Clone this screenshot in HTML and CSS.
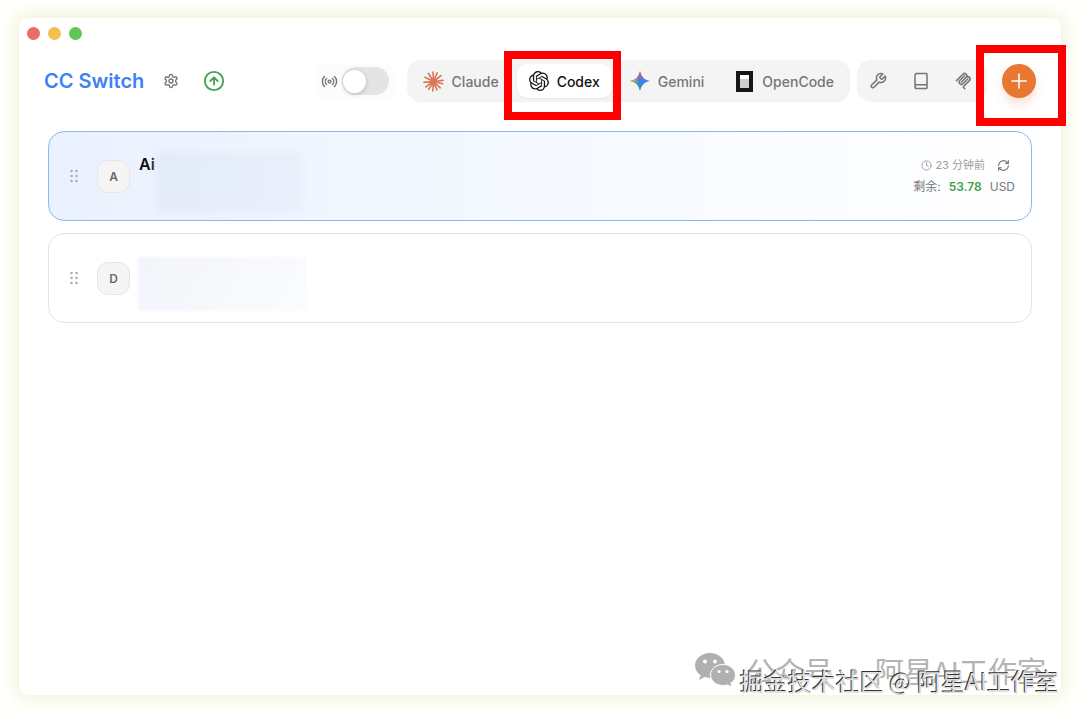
FILE: index.html
```html
<!DOCTYPE html>
<html lang="zh-CN">
<head>
<meta charset="utf-8">
<meta name="viewport" content="width=device-width, initial-scale=1">
<title>CC Switch</title>
<link rel="stylesheet" href="styles.css">
</head>
<body>
<div class="window">
  <div class="lights"><span class="light red"></span><span class="light yellow"></span><span class="light green"></span></div>
  <header class="header">
    <h1 class="brand">CC Switch</h1>
    <button class="icon-button settings" aria-label="设置">
      <svg class="line" width="16" height="16" viewBox="0 0 24 24"><path d="M12.22 2h-.44a2 2 0 0 0-2 2v.18a2 2 0 0 1-1 1.73l-.43.25a2 2 0 0 1-2 0l-.15-.08a2 2 0 0 0-2.73.73l-.22.38a2 2 0 0 0 .73 2.73l.15.1a2 2 0 0 1 1 1.72v.51a2 2 0 0 1-1 1.74l-.15.09a2 2 0 0 0-.73 2.73l.22.38a2 2 0 0 0 2.73.73l.15-.08a2 2 0 0 1 2 0l.43.25a2 2 0 0 1 1 1.73V20a2 2 0 0 0 2 2h.44a2 2 0 0 0 2-2v-.18a2 2 0 0 1 1-1.73l.43-.25a2 2 0 0 1 2 0l.15.08a2 2 0 0 0 2.73-.73l.22-.39a2 2 0 0 0-.73-2.73l-.15-.08a2 2 0 0 1-1-1.74v-.5a2 2 0 0 1 1-1.74l.15-.09a2 2 0 0 0 .73-2.73l-.22-.38a2 2 0 0 0-2.73-.73l-.15.08a2 2 0 0 1-2 0l-.43-.25a2 2 0 0 1-1-1.73V4a2 2 0 0 0-2-2z"/><circle cx="12" cy="12" r="3"/></svg>
    </button>
    <button class="icon-button update" aria-label="更新">
      <svg class="line" width="22" height="22" viewBox="0 0 24 24"><circle cx="12" cy="12" r="10"/><path d="m16 12-4-4-4 4M12 16V8"/></svg>
    </button>
    <div class="actions">
      <label class="proxy">
        <svg class="line" width="17" height="17" viewBox="0 0 24 24"><path d="M4.9 19.1C1 15.2 1 8.8 4.9 4.9M7.8 16.2c-2.3-2.3-2.3-6.1 0-8.5M16.2 7.8c2.3 2.3 2.3 6.1 0 8.5M19.1 4.9C23 8.8 23 15.1 19.1 19"/><circle cx="12" cy="12" r="2"/></svg>
        <input class="switch" type="checkbox" role="switch" aria-label="代理">
      </label>
      <nav class="tabs">
        <button class="tab">
          <svg width="21" height="21" viewBox="0 0 24 24" fill="none" stroke="#d97757" stroke-width="1.9" stroke-linecap="round"><path d="M12 12 11.5 1.2M12 12 16.2 2M12 12 20.5 5.2M12 12 22.8 10.8M12 12 22.5 14.5M12 12 19.7 19.2M12 12 16 21.5M12 12 11.2 22.8M12 12 6.5 21M12 12 3.2 18.2M12 12 1.2 13M12 12 2.2 7.2M12 12 6.2 2.8"/></svg>
          <span>Claude</span>
        </button>
        <button class="tab active" aria-current="page">
          <svg width="20" height="20" viewBox="0 0 24 24" fill="#161616"><path d="M22.2819 9.8211a5.9847 5.9847 0 0 0-.5157-4.9108 6.0462 6.0462 0 0 0-6.5098-2.9A6.0651 6.0651 0 0 0 4.9807 4.1818a5.9847 5.9847 0 0 0-3.9977 2.9 6.0462 6.0462 0 0 0 .7427 7.0966 5.98 5.98 0 0 0 .511 4.9107 6.051 6.051 0 0 0 6.5146 2.9001A5.9847 5.9847 0 0 0 13.2599 24a6.0557 6.0557 0 0 0 5.7718-4.2058 5.9894 5.9894 0 0 0 3.9977-2.9001 6.0557 6.0557 0 0 0-.7475-7.0729zm-9.022 12.6081a4.4755 4.4755 0 0 1-2.8764-1.0408l.1419-.0804 4.7783-2.7582a.7948.7948 0 0 0 .3927-.6813v-6.7369l2.02 1.1686a.071.071 0 0 1 .038.052v5.5826a4.504 4.504 0 0 1-4.4945 4.4944zm-9.6607-4.1254a4.4708 4.4708 0 0 1-.5346-3.0137l.142.0852 4.783 2.7582a.7712.7712 0 0 0 .7806 0l5.8428-3.3685v2.3324a.0804.0804 0 0 1-.0332.0615L9.74 19.9502a4.4992 4.4992 0 0 1-6.1408-1.6464zM2.3408 7.8956a4.485 4.485 0 0 1 2.3655-1.9728V11.6a.7664.7664 0 0 0 .3879.6765l5.8144 3.3543-2.0201 1.1685a.0757.0757 0 0 1-.071 0l-4.8303-2.7865A4.504 4.504 0 0 1 2.3408 7.8956zm16.5963 3.8558L13.1038 8.364 15.1192 7.2a.0757.0757 0 0 1 .071 0l4.8303 2.7913a4.4944 4.4944 0 0 1-.6765 8.1042v-5.6772a.79.79 0 0 0-.407-.667zm2.0107-3.0231l-.142-.0852-4.7735-2.7818a.7759.7759 0 0 0-.7854 0L9.409 9.2297V6.8974a.0662.0662 0 0 1 .0284-.0615l4.8303-2.7866a4.4992 4.4992 0 0 1 6.6802 4.66zM8.3065 12.863l-2.02-1.1638a.0804.0804 0 0 1-.038-.0567V6.0742a4.4992 4.4992 0 0 1 7.3757-3.4537l-.142.0805L8.704 5.459a.7948.7948 0 0 0-.3927.6813zm1.0976-2.3654l2.602-1.4998 2.6069 1.4998v2.9994l-2.5974 1.4997-2.6067-1.4997Z"/></svg>
          <span>Codex</span>
        </button>
        <button class="tab">
          <svg width="20" height="20" viewBox="0 0 24 24"><defs><linearGradient id="gem-red" x1="12" y1="0" x2="12" y2="11" gradientUnits="userSpaceOnUse"><stop offset=".3" stop-color="#e94b4b"/><stop offset="1" stop-color="#e94b4b" stop-opacity="0"/></linearGradient><linearGradient id="gem-yellow" x1="0" y1="12" x2="11" y2="12" gradientUnits="userSpaceOnUse"><stop offset=".2" stop-color="#f2bd2b"/><stop offset="1" stop-color="#f2bd2b" stop-opacity="0"/></linearGradient><linearGradient id="gem-green" x1="10" y1="24" x2="13" y2="13" gradientUnits="userSpaceOnUse"><stop offset=".2" stop-color="#21a565"/><stop offset="1" stop-color="#21a565" stop-opacity="0"/></linearGradient></defs><g id="spark"><path fill="#3c82ee" d="M12 0C13 6.5 17.500 11 24 12 17.500 13 13 17.500 12 24 11 17.500 6.500 13 0 12 6.500 11 11 6.500 12 0Z"/></g><path fill="url(#gem-red)" d="M12 0C13 6.500 17.500 11 24 12 17.500 13 13 17.500 12 24 11 17.500 6.500 13 0 12 6.500 11 11 6.500 12 0Z"/><path fill="url(#gem-yellow)" d="M12 0C13 6.500 17.500 11 24 12 17.500 13 13 17.500 12 24 11 17.500 6.500 13 0 12 6.500 11 11 6.500 12 0Z"/><path fill="url(#gem-green)" d="M12 0C13 6.500 17.500 11 24 12 17.500 13 13 17.500 12 24 11 17.500 6.500 13 0 12 6.500 11 11 6.500 12 0Z"/></svg>
          <span>Gemini</span>
        </button>
        <button class="tab">
          <svg width="20" height="21" viewBox="0 0 20 21"><path fill="#161616" d="M2 0h17v21H2z"/><path fill="#fff" d="M6 4h9v13H6z"/><path fill="#cfcfcf" d="M6 8h9v9H6z"/></svg>
          <span>OpenCode</span>
        </button>
      </nav>
      <div class="tools">
        <button class="icon-button" aria-label="技能"><svg class="line" width="18" height="18" viewBox="0 0 24 24"><path d="M14.700 6.300a1 1 0 0 0 0 1.400l1.600 1.600a1 1 0 0 0 1.400 0l3.770-3.770a6 6 0 0 1-7.940 7.940l-6.910 6.910a2.120 2.120 0 0 1-3-3l6.910-6.910a6 6 0 0 1 7.940-7.940l-3.760 3.760z"/></svg></button>
        <button class="icon-button" aria-label="提示词"><svg class="line" width="18" height="18" viewBox="0 0 24 24"><path d="M4 19.500v-15A2.500 2.500 0 0 1 6.500 2H19a1 1 0 0 1 1 1v18a1 1 0 0 1-1 1H6.500a1 1 0 0 1 0-5H20"/></svg></button>
        <button class="icon-button" aria-label="MCP"><svg class="line" width="18" height="18" viewBox="0 0 24 24"><path d="m2 11.500 8.600-8.600a3 3 0 0 1 4.300 4.300l-6.500 6.500M8.500 13.600l6.400-6.400a3 3 0 0 1 4.300 4.300l-7.800 7.800a1 1 0 0 0 0 1.400l1.600 1.600M12.700 5 6.400 11.400a3 3 0 0 0 4.300 4.300l6.400-6.400"/></svg></button>
      </div>
      <button class="add" aria-label="添加"><svg width="18" height="18" viewBox="0 0 18 18" fill="none" stroke="#fff" stroke-width="1.600" stroke-linecap="round"><path d="M9 2v14M2 9h14"/></svg></button>
    </div>
  </header>
  <main class="providers">
    <article class="card selected">
      <svg class="grip" width="8" height="14" viewBox="0 0 8 14"><circle cx="1.500" cy="2" r="1.300"/><circle cx="6.500" cy="2" r="1.300"/><circle cx="1.500" cy="7" r="1.300"/><circle cx="6.500" cy="7" r="1.300"/><circle cx="1.500" cy="12" r="1.300"/><circle cx="6.500" cy="12" r="1.300"/></svg>
      <span class="avatar">A</span>
      <div class="info"><h2 class="name">Ai</h2><span class="redaction"></span></div>
      <div class="usage">
        <div class="updated">
          <svg class="line" width="11" height="11" viewBox="0 0 24 24"><circle cx="12" cy="12" r="10"/><path d="M12 6v6l4 2"/></svg>
          <span>23 分钟前</span>
          <button class="icon-button refresh" aria-label="刷新"><svg class="line" width="13" height="13" viewBox="0 0 24 24"><path d="M3 12a9 9 0 0 1 9-9 9.750 9.750 0 0 1 6.740 2.740L21 8M21 3v5h-5M21 12a9 9 0 0 1-9 9 9.750 9.750 0 0 1-6.740-2.740L3 16M8 16H3v5"/></svg></button>
        </div>
        <div class="balance"><span>剩余:</span><strong>53.78</strong><span>USD</span></div>
      </div>
    </article>
    <article class="card">
      <svg class="grip" width="8" height="14" viewBox="0 0 8 14"><circle cx="1.500" cy="2" r="1.300"/><circle cx="6.500" cy="2" r="1.300"/><circle cx="1.500" cy="7" r="1.300"/><circle cx="6.500" cy="7" r="1.300"/><circle cx="1.500" cy="12" r="1.300"/><circle cx="6.500" cy="12" r="1.300"/></svg>
      <span class="avatar">D</span>
      <div class="info"><span class="redaction light-redaction"></span></div>
    </article>
  </main>
  <span class="marker marker-codex"></span>
  <span class="marker marker-add"></span>
  <div class="account-mark">
    <svg width="42" height="34" viewBox="0 0 42 34"><path fill="#b0b0b0" d="M15 0C6.500 0 0 5.600 0 12.500c0 4 2.200 7.500 5.600 9.800L4 27l5.500-2.900c1.800.5 3.500.8 5.500.8 8.300 0 15-5.500 15-12.400S23.300 0 15 0Z"/><path fill="#b0b0b0" stroke="#fff" d="M28 11.500c-7 0-12.500 4.700-12.500 10.500S21 32.500 28 32.500c1.600 0 3-.2 4.300-.6L37 34l-1.200-3.700c2.900-1.900 4.700-4.900 4.700-8.300 0-5.800-5.500-10.500-12.500-10.500Z"/><g fill="#fff"><circle cx="10" cy="8.500" r="1.900"/><circle cx="20" cy="8.500" r="1.900"/><circle cx="24" cy="18.500" r="1.600"/><circle cx="32" cy="18.500" r="1.600"/></g></svg>
    <span>公众号 · 阿星AI工作室</span>
  </div>
  <div class="community-mark">掘金技术社区 @ 阿星AI工作室</div>
</div>
</body>
</html>
```
FILE: styles.css
```css
* { box-sizing: border-box; }

body {
  margin: 0;
  min-height: 100vh;
  padding: 18px 19px 19px;
  display: flex;
  background: #fffffc;
  color: #111;
  font-family: Inter, "Noto Sans CJK SC", sans-serif;
}

button {
  border: 0;
  padding: 0;
  background: none;
  color: inherit;
  font: inherit;
}

.line {
  fill: none;
  stroke: currentColor;
  stroke-width: 2;
  stroke-linecap: round;
  stroke-linejoin: round;
}

.window {
  position: relative;
  flex: 1;
  display: flex;
  flex-direction: column;
  min-width: 0;
  border-radius: 9px;
  background: #fff;
  box-shadow: 0 0 16px 2px #eeeed4;
}

.lights {
  display: flex;
  gap: 8px;
  padding: 9px 8px 0;
}

.light {
  width: 13px;
  height: 13px;
  border-radius: 50%;
}

.red { background: #ed6a65; }
.yellow { background: #f3bf4f; }
.green { background: #61c554; }

.header {
  display: flex;
  align-items: center;
  padding: 20px 25px 0;
}

.brand {
  margin: 0;
  color: #3f82f3;
  font-size: 20px;
  font-weight: 600;
  line-height: 28px;
  white-space: nowrap;
}

.icon-button {
  display: grid;
  place-items: center;
  color: #737478;
}

.settings { margin-left: 19px; }

.update {
  margin-left: 24px;
  color: #41a453;
}

.actions {
  display: flex;
  align-items: center;
  margin-left: auto;
}

.proxy {
  display: flex;
  align-items: center;
  gap: 4px;
  margin-right: 12px;
  padding: 4px 6px;
  border-radius: 12px;
  background: #fcfcfc;
  color: #777;
}

.switch {
  appearance: none;
  display: flex;
  align-items: center;
  width: 47px;
  height: 28px;
  margin: 0;
  padding: 1px;
  border-radius: 14px;
  background: #e4e4e6;
}

.switch::before {
  content: "";
  width: 23px;
  height: 23px;
  border-radius: 50%;
  background: #fff;
  box-shadow: 0 1px 4px #0003;
}

.switch:checked { justify-content: flex-end; background: #41a453; }

.tabs, .tools {
  display: flex;
  align-items: center;
  height: 42px;
  border-radius: 14px;
  background: #f4f4f5;
}

.tabs {
  gap: 6px;
  padding: 4px;
}

.tab {
  display: flex;
  align-items: center;
  gap: 8px;
  height: 34px;
  padding: 0 12px;
  border-radius: 10px;
  color: #75767a;
  font-size: 14px;
  font-weight: 500;
}

.tab.active {
  background: #fff;
  box-shadow: 0 1px 2px #00000010;
  color: #111;
}

.tools {
  gap: 25px;
  margin-left: 7px;
  padding: 0 14px 0 12px;
}

.add {
  display: grid;
  place-items: center;
  width: 34px;
  height: 34px;
  margin-left: 15px;
  border-radius: 50%;
  background: #e87731;
  box-shadow: 0 6px 10px #e8773138;
}

.providers {
  display: grid;
  gap: 12px;
  padding: 29px 29px 0;
}

.card {
  display: flex;
  align-items: center;
  height: 90px;
  padding: 0 16px 0 21px;
  border: 1px solid #e4e4e6;
  border-radius: 16px;
  background: #fff;
}

.card.selected {
  border-color: #8db7f5;
  background: linear-gradient(90deg, #eaf1fe, #f7faff 60%, #fff);
}

.grip { fill: #adafb6; }

.avatar {
  display: grid;
  place-items: center;
  width: 33px;
  height: 33px;
  margin-left: 19px;
  border: 1px solid #e6e6e8;
  border-radius: 11px;
  background: #f5f5f6;
  color: #68696d;
  font-size: 12px;
  font-weight: 600;
}

.info {
  display: flex;
  margin-left: 8px;
}

.name {
  width: 18px;
  margin: 0;
  padding-left: 1px;
  overflow: hidden;
  font-size: 16px;
  font-weight: 600;
  line-height: 24px;
}

.selected .info { height: 48px; }

.redaction {
  width: 146px;
  height: 60px;
  background: linear-gradient(100deg, #e3ebf8, #e9f0fc);
  filter: blur(3px);
}

.light-redaction {
  width: 168px;
  height: 54px;
  margin-top: 12px;
  background: linear-gradient(120deg, #f3f5fb, #fbfcfe);
  filter: blur(1px);
}

.usage {
  display: grid;
  gap: 4px;
  margin-left: auto;
  color: #77787c;
  font-size: 12px;
  line-height: 18px;
}

.updated {
  display: flex;
  align-items: center;
  justify-content: flex-end;
  gap: 3px;
  padding-right: 5px;
  color: #9a9b9f;
  font-size: 11px;
}

.refresh { margin-left: 9px; }

.balance {
  display: flex;
  justify-content: flex-end;
  gap: 8px;
}

.balance strong {
  color: #3f9f46;
  font-weight: 600;
}

/* Annotation boxes and watermarks lie over the window. */
.marker {
  position: absolute;
  border: 8px solid #f00;
}

.marker-codex {
  top: 33px;
  right: 440px;
  width: 117px;
  height: 69px;
}

.marker-add {
  top: 27px;
  right: -5px;
  width: 90px;
  height: 81px;
}

.account-mark {
  position: absolute;
  right: 15px;
  bottom: 4px;
  display: flex;
  align-items: center;
  gap: 9px;
  color: #b4b4b4;
  font-family: "Noto Sans CJK SC", sans-serif;
  font-size: 29px;
  line-height: 42px;
  white-space: nowrap;
}

.community-mark {
  position: absolute;
  right: 2px;
  bottom: -4px;
  color: #ddd;
  font-family: "Noto Sans CJK SC", sans-serif;
  font-size: 24px;
  line-height: 36px;
  text-shadow: -1px -1px 0 #333;
  white-space: nowrap;
}
```
